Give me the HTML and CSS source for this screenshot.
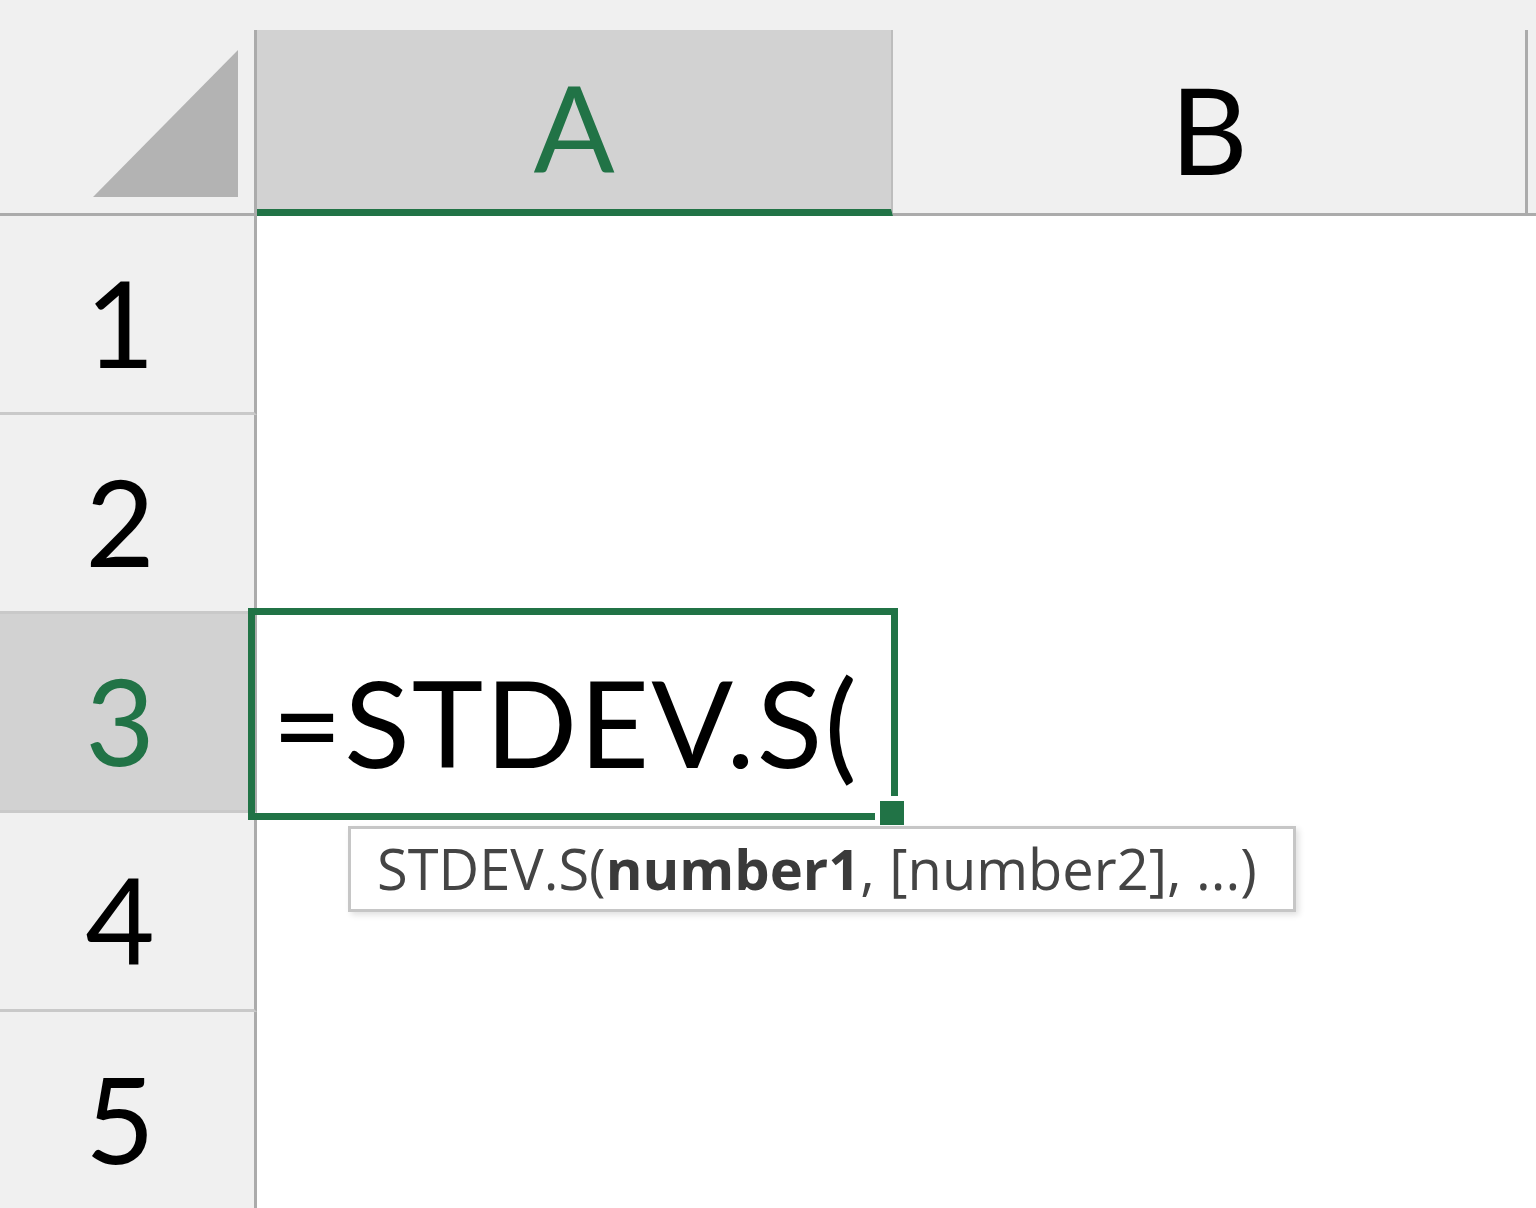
FILE: index.html
```html
<!DOCTYPE html>
<html>
<head>
  <title>STDEV.S</title>
  <link rel="stylesheet" href="styles.css">
</head>
<body>

  <div class="sheet">
    <div class="topbar"></div>

    <!-- column headers -->
    <div class="col-heads">
      <div class="corner">
        <svg width="254" height="183" viewBox="0 0 254 183">
          <polygon points="93,167 238,167 238,20" fill="#b3b3b3"/>
        </svg>
      </div>
      <div class="col-head active">A</div>
      <div class="col-head colb">B</div>
      <div class="col-rest"></div>
    </div>

    <!-- rows -->
    <div class="row">
      <div class="row-head">1</div>
      <div class="cells"></div>
    </div>
    <div class="row">
      <div class="row-head">2</div>
      <div class="cells"></div>
    </div>
    <div class="row">
      <div class="row-head active">3</div>
      <div class="cells">
        <div class="cell-edit">=STDEV.S(<span class="fill-handle"></span></div>
        <div class="tip">STDEV.S(<b>number1</b>, [number2], ...)</div>
      </div>
    </div>
    <div class="row">
      <div class="row-head">4</div>
      <div class="cells"></div>
    </div>
    <div class="row">
      <div class="row-head">5</div>
      <div class="cells"></div>
    </div>
  </div>

</body>
</html>
```

FILE: styles.css
```css
body {
  margin: 0;
  font-family: Lato, "Liberation Sans", sans-serif;
  background: #fff;
  overflow: hidden;
}
.sheet {
  width: 1536px;
  height: 1208px;
  overflow: hidden;
}
.topbar {
  height: 30px;
  background: #f0f0f0;
}
.col-heads {
  display: flex;
  height: 186px;
  background: #f0f0f0;
}
.corner {
  width: 254px;
  border-right: 3px solid #ababab;
  border-bottom: 3px solid #ababab;
  height: 183px;
}
.corner svg {
  display: block;
}
.col-head {
  font-size: 120px;
  color: #000;
  display: flex;
  justify-content: center;
  align-items: center;
  padding-top: 14px;
  box-sizing: border-box;
  border-bottom: 3px solid #ababab;
}
.col-head.active {
  width: 636px;
  background: #d2d2d2;
  color: #217346;
  border-bottom: 7px solid #217346;
  border-right: 2px solid #bdbdbd;
}
.colb {
  width: 635px;
  border-right: 3px solid #ababab;
}
.col-rest {
  flex: 1;
  border-bottom: 3px solid #ababab;
}
.row {
  display: flex;
  height: 199px;
}
.row-head {
  width: 240px;
  height: 180px;
  padding: 16px 14px 0 0;
  background: #f0f0f0;
  border-right: 3px solid #ababab;
  border-bottom: 3px solid #c9c9c9;
  font-size: 120px;
  color: #000;
  display: flex;
  justify-content: center;
  align-items: center;
}
.row-head.active {
  background: #d2d2d2;
  color: #217346;
}
.cells {
  flex: 1;
  position: relative;
  background: #fff;
}
.cell-edit {
  position: absolute;
  z-index: 1;
  left: -9px;
  top: -6px;
  width: 650px;
  height: 212px;
  box-sizing: border-box;
  border: 7px solid #217346;
  padding: 8px 0 0 17px;
  font-size: 121px;
  line-height: 198px;
  letter-spacing: 2px;
  color: #000;
  white-space: nowrap;
}
.fill-handle {
  position: absolute;
  left: 620px;
  top: 181px;
  width: 24px;
  height: 24px;
  background: #217346;
  border: 5px solid #fff;
}
.tip {
  position: absolute;
  z-index: 2;
  left: 91px;
  top: 212px;
  width: 948px;
  height: 86px;
  box-sizing: border-box;
  background: #fff;
  border: 3px solid #c6c6c6;
  box-shadow: 3px 3px 6px rgba(0, 0, 0, 0.12);
  font-family: "Open Sans", "Noto Sans", sans-serif;
  font-size: 56px;
  line-height: 78px;
  padding-left: 26px;
  color: #444;
  white-space: nowrap;
}
.tip b {
  font-weight: 700;
  color: #3a3a3a;
}
```
